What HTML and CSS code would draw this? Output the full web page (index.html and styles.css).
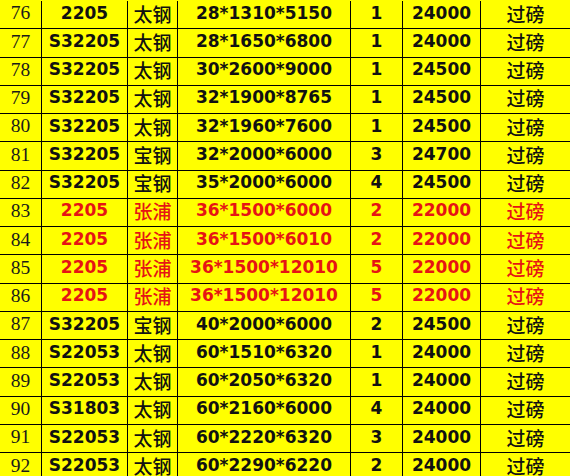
FILE: index.html
```html
<!DOCTYPE html>
<html lang="zh">
<head>
<meta charset="utf-8">
<link rel="stylesheet" href="styles.css">
</head>
<body>
<div class="sheet">
  <div class="row"><div class="no">76</div><div class="b">2205</div><div class="cjk">太钢</div><div class="b">28*1310*5150</div><div class="b">1</div><div class="b">24000</div><div class="cjk">过磅</div></div>
  <div class="row"><div class="no">77</div><div class="b">S32205</div><div class="cjk">太钢</div><div class="b">28*1650*6800</div><div class="b">1</div><div class="b">24000</div><div class="cjk">过磅</div></div>
  <div class="row"><div class="no">78</div><div class="b">S32205</div><div class="cjk">太钢</div><div class="b">30*2600*9000</div><div class="b">1</div><div class="b">24500</div><div class="cjk">过磅</div></div>
  <div class="row"><div class="no">79</div><div class="b">S32205</div><div class="cjk">太钢</div><div class="b">32*1900*8765</div><div class="b">1</div><div class="b">24500</div><div class="cjk">过磅</div></div>
  <div class="row"><div class="no">80</div><div class="b">S32205</div><div class="cjk">太钢</div><div class="b">32*1960*7600</div><div class="b">1</div><div class="b">24500</div><div class="cjk">过磅</div></div>
  <div class="row"><div class="no">81</div><div class="b">S32205</div><div class="cjk">宝钢</div><div class="b">32*2000*6000</div><div class="b">3</div><div class="b">24700</div><div class="cjk">过磅</div></div>
  <div class="row"><div class="no">82</div><div class="b">S32205</div><div class="cjk">宝钢</div><div class="b">35*2000*6000</div><div class="b">4</div><div class="b">24500</div><div class="cjk">过磅</div></div>
  <div class="row red"><div class="no">83</div><div class="b">2205</div><div class="cjk">张浦</div><div class="b">36*1500*6000</div><div class="b">2</div><div class="b">22000</div><div class="cjk">过磅</div></div>
  <div class="row red"><div class="no">84</div><div class="b">2205</div><div class="cjk">张浦</div><div class="b">36*1500*6010</div><div class="b">2</div><div class="b">22000</div><div class="cjk">过磅</div></div>
  <div class="row red"><div class="no">85</div><div class="b">2205</div><div class="cjk">张浦</div><div class="b">36*1500*12010</div><div class="b">5</div><div class="b">22000</div><div class="cjk">过磅</div></div>
  <div class="row red"><div class="no">86</div><div class="b">2205</div><div class="cjk">张浦</div><div class="b">36*1500*12010</div><div class="b">5</div><div class="b">22000</div><div class="cjk">过磅</div></div>
  <div class="row"><div class="no">87</div><div class="b">S32205</div><div class="cjk">宝钢</div><div class="b">40*2000*6000</div><div class="b">2</div><div class="b">24500</div><div class="cjk">过磅</div></div>
  <div class="row"><div class="no">88</div><div class="b">S22053</div><div class="cjk">太钢</div><div class="b">60*1510*6320</div><div class="b">1</div><div class="b">24000</div><div class="cjk">过磅</div></div>
  <div class="row"><div class="no">89</div><div class="b">S22053</div><div class="cjk">太钢</div><div class="b">60*2050*6320</div><div class="b">1</div><div class="b">24000</div><div class="cjk">过磅</div></div>
  <div class="row"><div class="no">90</div><div class="b">S31803</div><div class="cjk">太钢</div><div class="b">60*2160*6000</div><div class="b">4</div><div class="b">24000</div><div class="cjk">过磅</div></div>
  <div class="row"><div class="no">91</div><div class="b">S22053</div><div class="cjk">太钢</div><div class="b">60*2220*6320</div><div class="b">3</div><div class="b">24000</div><div class="cjk">过磅</div></div>
  <div class="row"><div class="no">92</div><div class="b">S22053</div><div class="cjk">太钢</div><div class="b">60*2290*6220</div><div class="b">2</div><div class="b">24000</div><div class="cjk">过磅</div></div>
</div>
</body>
</html>
```
FILE: styles.css
```css
html, body {
  margin: 0;
  padding: 0;
  background: #ffff00;
  overflow: hidden;
}
.sheet {
  margin-top: 1px;
  width: 570px;
  display: grid;
  grid-template-columns: 41px 85px 49px 172px 51px 77px 1fr;
  grid-auto-rows: 27.27px;
  gap: 1px;
  background: #000;
  color: #111;
}
.row {
  display: contents;
}
.row > div {
  background: #ffff00;
  display: flex;
  align-items: center;
  justify-content: center;
  white-space: nowrap;
  overflow: hidden;
  line-height: 1;
  padding-bottom: 3px;
  box-sizing: border-box;
}
.no {
  font-family: "Liberation Serif", serif;
  font-size: 19.5px;
  color: #1a1a1a;
}
.b {
  font-family: "DejaVu Sans", sans-serif;
  font-weight: bold;
  font-size: 17px;
}
.cjk {
  font-family: "Noto Sans CJK SC", sans-serif;
  font-weight: 500;
  font-size: 19px;
}
.red .b, .red .cjk {
  color: #e61414;
}
```
